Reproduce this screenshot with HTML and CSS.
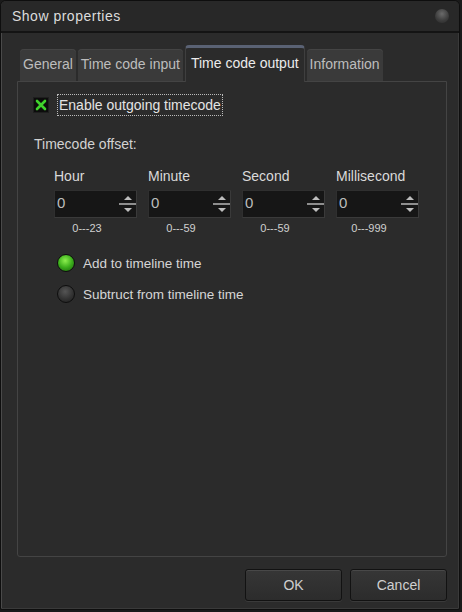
FILE: index.html
```html
<!doctype html>
<html lang="en">
<head>
<title>Show properties</title>
<link rel="stylesheet" href="styles.css">
</head>
<body>

<article class="dialog">
	<header class="titlebar">
		<h1>Show properties</h1>
		<span class="knob"></span>
	</header>

	<div class="content">
		<nav class="tabs">
			<a class="tab">General</a>
			<a class="tab">Time code input</a>
			<a class="tab current">Time code output</a>
			<a class="tab">Information</a>
		</nav>

		<section class="pane">
			<label class="check">
				<span class="box">
					<svg width="12" height="12" viewBox="0 0 12 12"><path d="M2 2 L10 10 M10 2 L2 10" stroke="#3fd22c" stroke-width="2.6" stroke-linecap="round"/></svg>
				</span>
				<span class="focus">Enable outgoing timecode</span>
			</label>

			<p class="caption">Timecode offset:</p>

			<div class="fields">
				<div class="field">
					<span class="name">Hour</span>
					<span class="spin"><span class="val">0</span><span class="arrows"><i class="up"></i><b></b><i class="down"></i></span></span>
					<span class="range">0---23</span>
				</div>
				<div class="field">
					<span class="name">Minute</span>
					<span class="spin"><span class="val">0</span><span class="arrows"><i class="up"></i><b></b><i class="down"></i></span></span>
					<span class="range">0---59</span>
				</div>
				<div class="field">
					<span class="name">Second</span>
					<span class="spin"><span class="val">0</span><span class="arrows"><i class="up"></i><b></b><i class="down"></i></span></span>
					<span class="range">0---59</span>
				</div>
				<div class="field">
					<span class="name">Millisecond</span>
					<span class="spin"><span class="val">0</span><span class="arrows"><i class="up"></i><b></b><i class="down"></i></span></span>
					<span class="range">0---999</span>
				</div>
			</div>

			<div class="radios">
				<label class="radio"><span class="dot on"></span>Add to timeline time</label>
				<label class="radio"><span class="dot"></span>Subtruct from timeline time</label>
			</div>
		</section>

		<footer class="buttons">
			<button class="btn">OK</button>
			<button class="btn">Cancel</button>
		</footer>
	</div>
</article>

</body>
</html>
```

FILE: styles.css
```css
html, body {
	margin: 0;
	padding: 0;
	background: #1a1a1a;
}
body {
	font-family: "Liberation Sans", Arial, sans-serif;
	font-size: 13px;
	color: #d2d2d2;
}
.dialog {
	width: 458px;
	height: 608px;
	border: 1px solid #0e0e0e;
	box-shadow: inset 1px 0 0 #4a4a4a, inset -1px 0 0 #3a3a3a, inset 0 -1px 0 #3a3a3a;
	border-radius: 6px 6px 2px 2px;
	background: #2b2b2b;
	display: flex;
	flex-direction: column;
	overflow: hidden;
}
.titlebar {
	height: 30px;
	flex: none;
	display: flex;
	align-items: center;
	justify-content: space-between;
	padding: 0 10px 0 11px;
	background: #282828;
	border-bottom: 2px solid #141414;
}
.titlebar h1 {
	margin: 0;
	font-size: 14px;
	font-weight: normal;
	color: #dcdcdc;
	letter-spacing: 0.5px;
}
.knob {
	width: 14px;
	height: 14px;
	border-radius: 50%;
	background: radial-gradient(circle at 50% 35%, #6a6a6a, #3c3c3c 60%, #2a2a2a);
}

.content {
	flex: 1;
	display: flex;
	flex-direction: column;
	padding: 12px 12px 9px 16px;
}

.tabs {
	display: flex;
	align-items: flex-end;
	gap: 2px;
	padding-left: 3px;
	height: 36px;
	font-size: 14px;
}
.tab {
	display: block;
	height: 32px;
	line-height: 30px;
	padding: 0 3px;
	background: #3a3a3a;
	color: #bdbdbd;
	border-radius: 4px 4px 0 0;
	box-shadow: inset 0 1px 0 #444;
	white-space: nowrap;
}
.tab.current {
	padding: 0 5px;
	background: #2b2b2b;
	color: #ececec;
	border: 1px solid #3f3f3f;
	border-top: 3px solid #5a6274;
	border-bottom: none;
	margin-bottom: -1px;
	position: relative;
	line-height: 30px;
	height: 34px;
	box-shadow: none;
}

.pane {
	box-sizing: border-box;
	height: 476px;
	border: 1px solid #444;
	border-radius: 0 0 3px 3px;
	padding: 12px 16px 0 16px;
}

.check {
	display: flex;
	align-items: center;
	gap: 9px;
}
.box {
	width: 14px;
	height: 14px;
	background: #0c0c0c;
	box-shadow: 0 0 0 1px #1e1e1e;
	display: flex;
	align-items: center;
	justify-content: center;
}
.focus {
	border: 1px dotted #bbb;
	padding: 2px 1px 2px 1px;
	font-size: 14px;
	color: #e4e4e4;
}

.caption {
	margin: 20px 0 0;
	font-size: 14px;
}

.fields {
	display: grid;
	grid-template-columns: repeat(4, 83px);
	column-gap: 11px;
	margin: 16px 0 0 20px;
}
.field {
	display: flex;
	flex-direction: column;
}
.name {
	font-size: 14px;
	height: 16px;
	color: #dadada;
}
.spin {
	margin-top: 6px;
	height: 28px;
	box-sizing: border-box;
	background: #161616;
	border: 1px solid #2f2f2f;
	border-right-color: #3a3a3a;
	border-bottom-color: #3a3a3a;
	display: flex;
	justify-content: space-between;
}
.val {
	padding: 3px 0 0 2px;
	font-size: 15px;
	color: #bdbdbd;
}
.arrows {
	width: 17px;
	display: flex;
	flex-direction: column;
	align-items: center;
	justify-content: center;
	gap: 3px;
}
.arrows b {
	display: block;
	width: 17px;
	height: 2px;
	background: #8e8e8e;
}
.arrows i {
	width: 0;
	height: 0;
	border-left: 4px solid transparent;
	border-right: 4px solid transparent;
}
.arrows .up {
	border-bottom: 4px solid #bdbdbd;
}
.arrows .down {
	border-top: 4px solid #bdbdbd;
}
.range {
	font-size: 11px;
	width: 66px;
	text-align: center;
	margin-top: 4px;
	color: #d0d0d0;
}

.radios {
	margin: 20px 0 0 23px;
	display: flex;
	flex-direction: column;
	gap: 13px;
}
.radio {
	display: flex;
	align-items: center;
	gap: 8px;
	font-size: 13.5px;
	color: #d6d6d6;
}
.dot {
	width: 16px;
	height: 16px;
	border-radius: 50%;
	border: 1px solid #0e0e0e;
	background: radial-gradient(circle at 45% 35%, #555, #333 55%, #1c1c1c);
}
.dot.on {
	background: radial-gradient(circle at 45% 35%, #8cef4e, #3cae1c 50%, #18600a);
}

.buttons {
	display: flex;
	justify-content: flex-end;
	gap: 8px;
	margin-top: 12px;
}
.btn {
	width: 97px;
	height: 32px;
	font-family: "Liberation Sans", Arial, sans-serif;
	font-size: 14px;
	color: #cfcfcf;
	background: linear-gradient(#363636, #2c2c2c);
	border: 1px solid #121212;
	border-radius: 3px;
	box-shadow: inset 0 1px 0 #484848, 0 1px 0 #3a3a3a;
}
```
